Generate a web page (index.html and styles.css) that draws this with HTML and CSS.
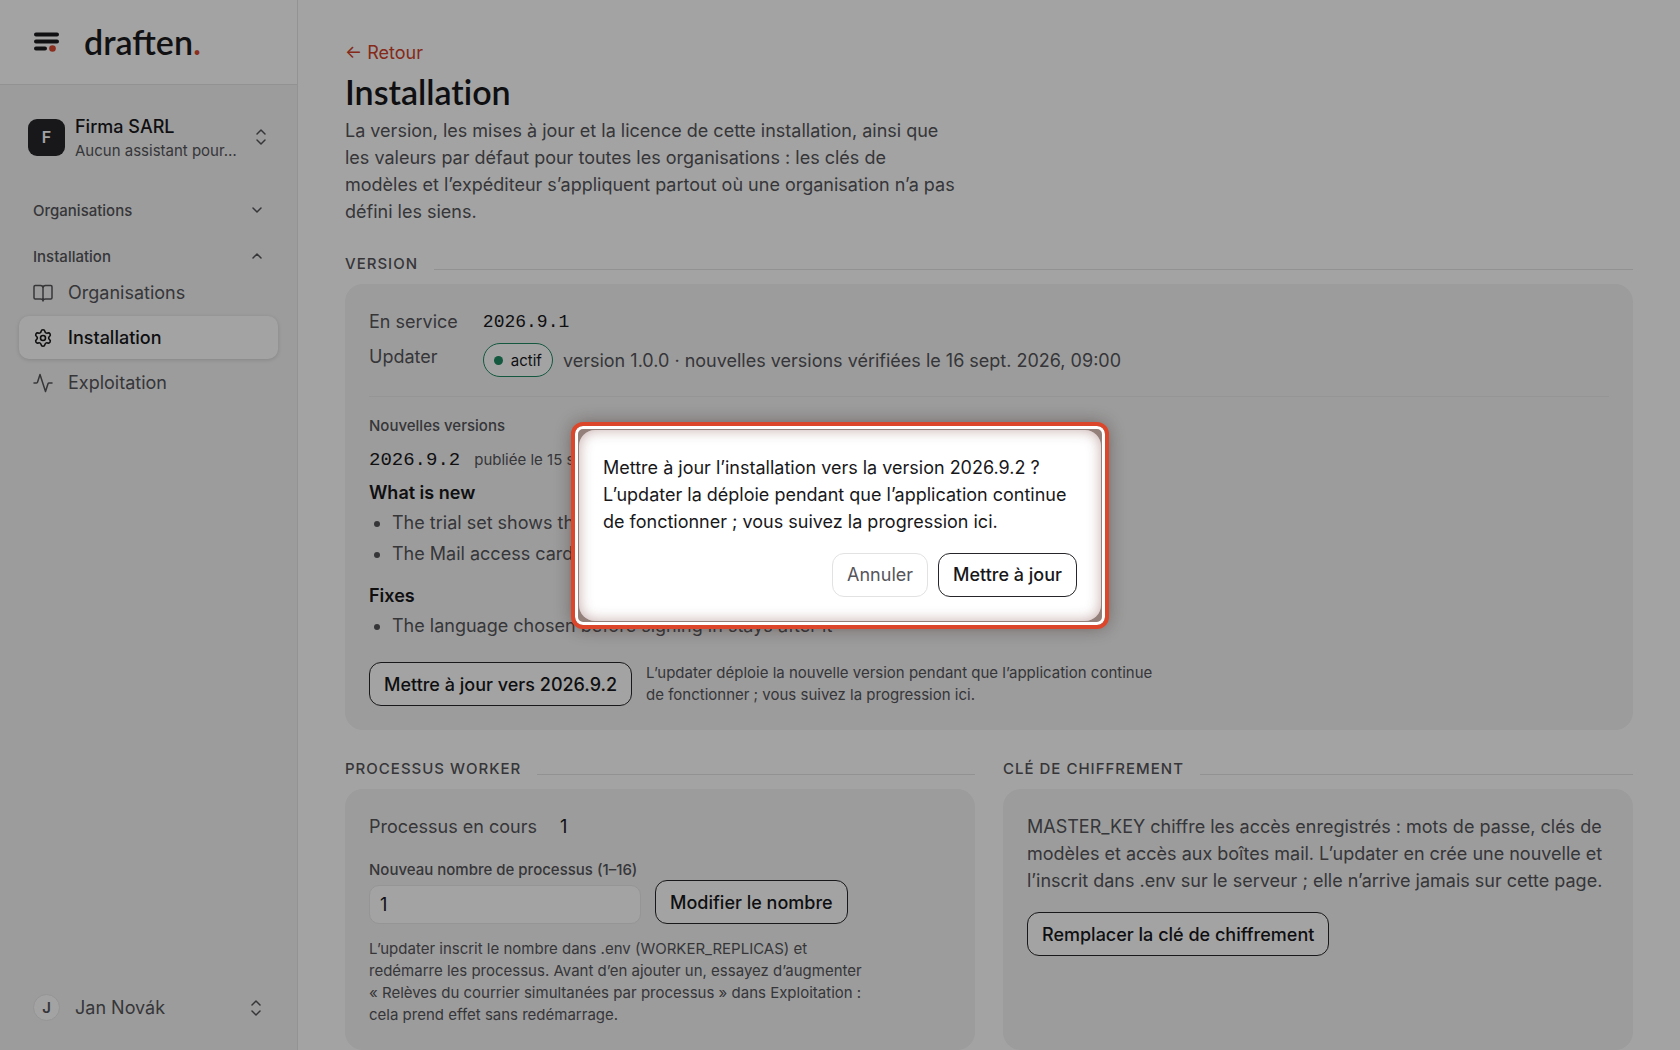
FILE: index.html
```html
<!DOCTYPE html>
<html lang="fr">
<head>
    <meta charset="UTF-8">
    <meta name="viewport" content="width=device-width, initial-scale=1.0">
    <title>Installation - draften.</title>
    <link rel="stylesheet" href="styles.css">
</head>
<body>
    <div class="app">
        <aside class="sidebar">
            <div class="brand">
                <svg class="brand-mark" width="26" height="22" viewBox="0 0 26 22">
                    <path d="M3 3.500h21M3 10.500h21M3 17.500h9"/>
                    <circle cx="19.500" cy="17.500" r="3.300"/>
                </svg>
                <span class="brand-name">draften<span class="brand-dot">.</span></span>
            </div>

            <button class="org-switch" type="button">
                <span class="org-avatar">F</span>
                <span class="org-text">
                    <span class="org-name">Firma SARL</span>
                    <span class="org-sub">Aucun assistant pour…</span>
                </span>
                <svg class="updown" width="16" height="18" viewBox="0 0 16 18"><path d="M4 6l4-4 4 4M4 12l4 4 4-4"/></svg>
            </button>

            <nav class="nav">
                <button class="nav-group" type="button">Organisations
                    <svg width="14" height="14" viewBox="0 0 14 14"><path d="M3 5l4 4 4-4"/></svg>
                </button>
                <button class="nav-group" type="button">Installation
                    <svg width="14" height="14" viewBox="0 0 14 14"><path d="M3 9l4-4 4 4"/></svg>
                </button>
                <a class="nav-item" href="#organisations">
                    <svg width="20" height="20" viewBox="0 0 20 20"><path d="M10 5c0-1.500-1-2.500-2.500-2.500H2.200c-.7 0-1.200.5-1.200 1.200v11.100c0 .7.500 1.200 1.200 1.200H7.500c1.500 0 2.500.6 2.500 2 0-1.400 1-2 2.500-2h5.300c.7 0 1.200-.5 1.200-1.200V3.700c0-.7-.5-1.200-1.200-1.200h-5.300C11 2.500 10 3.500 10 5zv13"/></svg>
                    Organisations
                </a>
                <a class="nav-item active" href="#installation">
                    <svg class="gear" width="20" height="20" viewBox="0 0 24 24"><path d="M9.700 4.100a2.340 2.340 0 0 1 4.600 0 2.340 2.340 0 0 0 3.300 1.900 2.340 2.340 0 0 1 2.300 4 2.340 2.340 0 0 0 0 4 2.340 2.340 0 0 1-2.300 4 2.340 2.340 0 0 0-3.300 1.900 2.340 2.340 0 0 1-4.600 0 2.340 2.340 0 0 0-3.300-1.900 2.340 2.340 0 0 1-2.300-4 2.340 2.340 0 0 0 0-4 2.340 2.340 0 0 1 2.300-4 2.340 2.340 0 0 0 3.300-1.900"/><circle cx="12" cy="12" r="3"/></svg>
                    Installation
                </a>
                <a class="nav-item" href="#exploitation">
                    <svg width="20" height="20" viewBox="0 0 20 20"><path d="M1 10h2.500c.5 0 .9-.3 1-.8L7 1.500 12.500 18.500l2.500-7.700c.2-.5.500-.8 1-.8h3"/></svg>
                    Exploitation
                </a>
            </nav>

            <button class="user-switch" type="button">
                <span class="user-avatar">J</span>
                <span class="user-name">Jan Novák</span>
                <svg class="updown" width="16" height="18" viewBox="0 0 16 18"><path d="M4 6l4-4 4 4M4 12l4 4 4-4"/></svg>
            </button>
        </aside>

        <main class="main">
            <a class="back" href="#retour">← Retour</a>
            <h1>Installation</h1>
            <p class="intro">La version, les mises à jour et la licence de cette installation, ainsi que les valeurs par défaut pour toutes les organisations : les clés de modèles et l’expéditeur s’appliquent partout où une organisation n’a pas défini les siens.</p>

            <section>
                <h2>Version</h2>
                <div class="card">
                    <dl class="facts">
                        <dt>En service</dt>
                        <dd class="mono">2026.9.1</dd>
                        <dt>Updater</dt>
                        <dd class="status"><span class="pill">actif</span> version 1.0.0 · nouvelles versions vérifiées le 16 sept. 2026, 09:00</dd>
                    </dl>

                    <div class="releases">
                        <h3>Nouvelles versions</h3>
                        <p class="release"><span class="release-no">2026.9.2</span> <span class="small">publiée le 15 sept.</span></p>
                        <h4>What is new</h4>
                        <ul>
                            <li>The trial set shows the</li>
                            <li>The Mail access card</li>
                        </ul>
                        <h4>Fixes</h4>
                        <ul>
                            <li>The language chosen before signing in stays after it</li>
                        </ul>
                        <div class="update-row">
                            <button class="btn" type="button">Mettre à jour vers 2026.9.2</button>
                            <p class="small">L’updater déploie la nouvelle version pendant que l’application continue de fonctionner ; vous suivez la progression ici.</p>
                        </div>
                    </div>
                </div>
            </section>

            <div class="columns">
                <section>
                    <h2>Processus worker</h2>
                    <div class="card">
                        <p class="running">Processus en cours <strong>1</strong></p>
                        <form class="count-form">
                            <div class="field">
                                <label for="replicas">Nouveau nombre de processus (1–16)</label>
                                <input id="replicas" type="text" inputmode="numeric" value="1">
                            </div>
                            <button class="btn" type="button">Modifier le nombre</button>
                        </form>
                        <p class="small hint">L’updater inscrit le nombre dans .env (WORKER_REPLICAS) et redémarre les processus. Avant d’en ajouter un, essayez d’augmenter «&nbsp;Relèves du courrier simultanées par processus&nbsp;» dans Exploitation&nbsp;: cela prend effet sans redémarrage.</p>
                    </div>
                </section>
                <section>
                    <h2>Clé de chiffrement</h2>
                    <div class="card">
                        <p class="key-text">MASTER_KEY chiffre les accès enregistrés : mots de passe, clés de modèles et accès aux boîtes mail. L’updater en crée une nouvelle et l’inscrit dans .env sur le serveur ; elle n’arrive jamais sur cette page.</p>
                        <button class="btn" type="button">Remplacer la clé de chiffrement</button>
                    </div>
                </section>
            </div>
        </main>
    </div>

    <div class="overlay">
        <div class="dialog-ring">
            <div class="dialog" role="dialog" aria-modal="true" aria-labelledby="dialog-text">
                <p id="dialog-text">Mettre à jour l’installation vers la version 2026.9.2 ? L’updater la déploie pendant que l’application continue de fonctionner ; vous suivez la progression ici.</p>
                <div class="dialog-actions">
                    <button class="btn btn-quiet" type="button">Annuler</button>
                    <button class="btn" type="button">Mettre à jour</button>
                </div>
            </div>
        </div>
    </div>
</body>
</html>
```
FILE: styles.css
```css
* {
    box-sizing: border-box;
}
body {
    margin: 0;
    font-family: Inter, sans-serif;
    font-size: 18px;
    line-height: 27px;
    color: #18181b;
    background-color: #fff;
}
h1, h2, h3, h4, p, ul, dl, dd {
    margin: 0;
}
button, input {
    font: inherit;
    color: inherit;
}
svg {
    flex: none;
    fill: none;
    stroke: currentColor;
    stroke-width: 1.5;
    stroke-linecap: round;
    stroke-linejoin: round;
}
.app {
    display: flex;
    height: 100vh;
    overflow: hidden;
}

/* sidebar */
.sidebar {
    display: flex;
    flex-direction: column;
    flex: none;
    width: 298px;
    background-color: #f4f4f4;
    border-right: 1px solid #e6e6e6;
    color: #55555a;
}
.brand {
    display: flex;
    align-items: center;
    gap: 25px;
    height: 85px;
    padding: 0 33px;
    background-color: #fff;
    border-bottom: 1px solid #e4e4e4;
}
.brand-mark {
    stroke: #1c1c20;
    stroke-width: 4;
}
.brand-mark circle {
    fill: #d9482f;
    stroke: none;
}
.brand-name {
    font-family: Lato, sans-serif;
    font-size: 34px;
    font-weight: 600;
    line-height: 40px;
    color: #1c1c20;
}
.brand-dot {
    color: #d9482f;
}
.org-switch,
.user-switch {
    display: flex;
    align-items: center;
    gap: 10px;
    padding: 0;
    border: none;
    background: none;
    text-align: left;
    cursor: pointer;
}
.org-switch {
    margin: 26px 28px 0;
}
.org-avatar {
    display: flex;
    align-items: center;
    justify-content: center;
    flex: none;
    width: 37px;
    height: 37px;
    border-radius: 9px;
    background-color: #26262a;
    color: #fff;
    font-size: 16px;
    font-weight: 600;
}
.org-text {
    display: flex;
    flex-direction: column;
    flex: 1;
    padding-top: 4px;
    line-height: 24px;
}
.org-name {
    color: #18181b;
    font-weight: 500;
}
.org-sub {
    font-size: 15px;
    white-space: nowrap;
}
.nav {
    display: flex;
    flex-direction: column;
    gap: 2px;
    padding: 25px 19px 0;
}
.nav-group {
    display: flex;
    align-items: center;
    justify-content: space-between;
    height: 44px;
    padding: 0 14px;
    border: none;
    background: none;
    font-size: 15px;
    font-weight: 500;
    cursor: pointer;
}
.nav-item {
    display: flex;
    align-items: center;
    gap: 15px;
    height: 43px;
    padding: 0 14px;
    border-radius: 10px;
    color: #55555a;
    text-decoration: none;
}
.nav-group + .nav-item {
    margin-top: -9px;
}
.nav-item.active {
    background-color: #fff;
    box-shadow: 0 1px 4px rgba(0, 0, 0, 0.14);
    color: #18181b;
    font-weight: 500;
}
.gear {
    stroke-width: 1.9;
}
.user-switch {
    margin: auto 33px 29px;
}
.user-avatar {
    display: flex;
    align-items: center;
    justify-content: center;
    width: 27px;
    height: 27px;
    margin-right: 5px;
    border: 1px solid #e8e8e8;
    border-radius: 50%;
    background-color: #fff;
    font-size: 15px;
    font-weight: 600;
}
.user-name {
    flex: 1;
}

/* content */
.main {
    flex: 1;
    min-width: 0;
    padding: 39px 47px 0;
    overflow: hidden;
}
.back {
    display: block;
    color: #d0402a;
    text-decoration: none;
}
h1 {
    font-family: Lato, sans-serif;
    font-size: 34px;
    font-weight: 600;
    font-variant-ligatures: none;
    line-height: 51px;
}
.intro {
    max-width: 612px;
    color: #55555a;
}
h2 {
    display: flex;
    align-items: center;
    gap: 16px;
    margin: 27px 0 8px;
    font-size: 15px;
    font-weight: 500;
    line-height: 24px;
    letter-spacing: 1px;
    text-transform: uppercase;
    color: #55555a;
}
h2::after {
    content: "";
    flex: 1;
    height: 1px;
    margin-top: 10px;
    background-color: #e4e4e4;
}
.card {
    padding: 24px;
    border-radius: 18px;
    background-color: #f4f4f4;
    color: #55555a;
}
.facts {
    display: grid;
    grid-template-columns: auto 1fr;
    align-items: start;
    column-gap: 25px;
    row-gap: 6px;
    padding-bottom: 19px;
    border-bottom: 1px solid #e9e9e9;
}
.mono,
.release-no {
    font-family: "Liberation Mono", monospace;
    color: #18181b;
}
.mono {
    line-height: 29px;
}
.status {
    display: flex;
    align-items: center;
    gap: 10px;
}
.pill {
    display: flex;
    align-items: center;
    gap: 8px;
    height: 34px;
    padding: 0 10px;
    border: 1px solid #1f8a63;
    border-radius: 17px;
    background-color: #fff;
    color: #18181b;
    font-size: 15px;
}
.pill::before {
    content: "";
    width: 9px;
    height: 9px;
    border-radius: 50%;
    background-color: #1f8a63;
}
.releases h3 {
    margin-top: 15px;
    font-size: 15px;
    font-weight: 500;
}
.release {
    display: flex;
    align-items: baseline;
    gap: 14px;
    margin-top: 8px;
}
.release-no {
    font-size: 19px;
}
.small {
    font-size: 15px;
    line-height: 22px;
}
.releases h4 {
    margin-top: 5px;
    font-size: 18px;
    font-weight: 600;
    color: #18181b;
}
.releases ul {
    display: grid;
    gap: 4px;
    padding-left: 23px;
    margin-top: 3px;
}
.releases ul + h4 {
    margin-top: 15px;
}
.btn {
    height: 44px;
    padding: 0 14px;
    border: 1px solid #26262a;
    border-radius: 12px;
    background-color: #fff;
    color: #18181b;
    font-weight: 500;
    white-space: nowrap;
    cursor: pointer;
}
.btn-quiet {
    border-color: #e2e2e2;
    color: #55555a;
    font-weight: 400;
}
.update-row {
    display: flex;
    align-items: center;
    gap: 14px;
    margin-top: 23px;
}
.update-row .small {
    max-width: 520px;
}
.columns {
    display: grid;
    grid-template-columns: 1fr 1fr;
    gap: 28px;
}
.columns section {
    display: flex;
    flex-direction: column;
}
.columns .card {
    flex: 1;
}
.running strong {
    margin-left: 18px;
    color: #18181b;
    font-weight: 400;
}
.count-form {
    display: flex;
    align-items: flex-end;
    gap: 14px;
    margin-top: 18px;
}
.field {
    display: flex;
    flex-direction: column;
    gap: 3px;
    width: 272px;
}
.field label {
    font-size: 15px;
    font-weight: 500;
    line-height: 24px;
}
.field input {
    width: 100%;
    height: 39px;
    padding: 0 10px;
    border: 1px solid #e9e9e9;
    border-radius: 10px;
    background-color: #fff;
    color: #18181b;
}
.hint {
    max-width: 510px;
    margin-top: 14px;
}
.key-text {
    margin-bottom: 18px;
}

/* confirmation */
.overlay {
    position: fixed;
    inset: 0;
    display: flex;
    align-items: center;
    justify-content: center;
    background-color: rgba(0, 0, 0, 0.36);
}
.dialog-ring {
    padding: 1px;
    border: 3px solid #fff;
    border-radius: 8px;
    outline: 4px solid #dc472c;
    background-color: #94807b;
    box-shadow: 0 0 18px 3px rgba(60, 40, 35, 0.5);
}
.dialog {
    width: 522px;
    padding: 24px;
    border-radius: 16px;
    background-color: #fff;
    box-shadow: inset 0 0 14px rgba(110, 50, 45, 0.4);
}
.dialog-actions {
    display: flex;
    justify-content: flex-end;
    gap: 10px;
    margin-top: 18px;
}
```
